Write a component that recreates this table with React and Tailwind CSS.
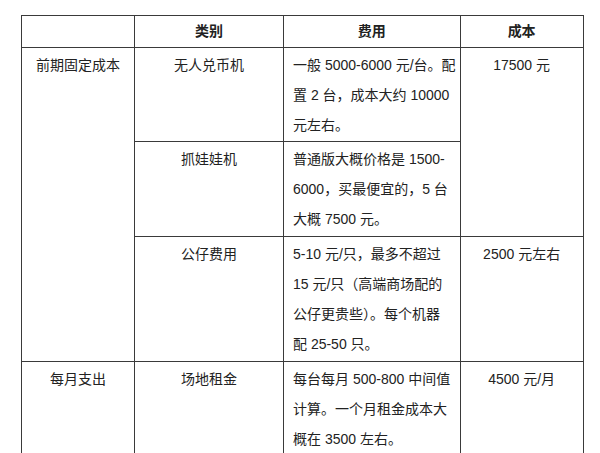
import React from 'react';

const rows = [
  {
    group: '前期固定成本',
    groupSpan: 3,
    name: '无人兑币机',
    fee: ['一般 5000-6000 元/台。配', '置 2 台，成本大约 10000', '元左右。'],
    cost: '17500 元',
    costSpan: 2,
    h: 'h-[94px]',
  },
  {
    name: '抓娃娃机',
    fee: ['普通版大概价格是 1500-', '6000，买最便宜的，5 台', '大概 7500 元。'],
    h: 'h-[95px]',
  },
  {
    name: '公仔费用',
    fee: ['5-10 元/只，最多不超过', '15 元/只（高端商场配的', '公仔更贵些）。每个机器', '配 25-50 只。'],
    cost: '2500 元左右',
    costSpan: 1,
    h: 'h-[125px]',
  },
  {
    group: '每月支出',
    groupSpan: 1,
    name: '场地租金',
    fee: ['每台每月 500-800 中间值', '计算。一个月租金成本大', '概在 3500 左右。'],
    cost: '4500 元/月',
    costSpan: 1,
    h: 'h-[100px]',
  },
];

const cell = 'border border-[#3a3a3a] align-top pt-[2px] leading-[30px]';

export default function App() {
  return (
    <div className="w-[600px] h-[453px] overflow-hidden bg-white pt-[15px] pl-[21px] font-['Liberation_Sans','Noto_Sans_CJK_SC',sans-serif] text-[14px] text-[#222]">
      <table className="table-fixed border-collapse border border-[#555]">
        <colgroup>
          <col className="w-[113px]" />
          <col className="w-[149px]" />
          <col className="w-[174px]" />
          <col className="w-[123px]" />
        </colgroup>
        <thead>
          <tr className="h-[32px]">
            <th className="border border-[#3a3a3a]"></th>
            <th className="border border-[#3a3a3a] font-bold text-center align-middle">类别</th>
            <th className="border border-[#3a3a3a] font-bold text-center align-middle">费用</th>
            <th className="border border-[#3a3a3a] font-bold text-center align-middle">成本</th>
          </tr>
        </thead>
        <tbody>
          {rows.map((r, i) => (
            <tr key={i} className={r.h}>
              {r.group && (
                <td rowSpan={r.groupSpan} className={`${cell} text-center`}>
                  {r.group}
                </td>
              )}
              <td className={`${cell} text-center`}>{r.name}</td>
              <td className={`${cell} pl-[9px] pr-[4px] whitespace-nowrap`}>
                {r.fee.map((line, j) => (
                  <div key={j}>{line}</div>
                ))}
              </td>
              {r.cost && (
                <td rowSpan={r.costSpan} className={`${cell} text-center`}>
                  {r.cost}
                </td>
              )}
            </tr>
          ))}
        </tbody>
      </table>
    </div>
  );
}
